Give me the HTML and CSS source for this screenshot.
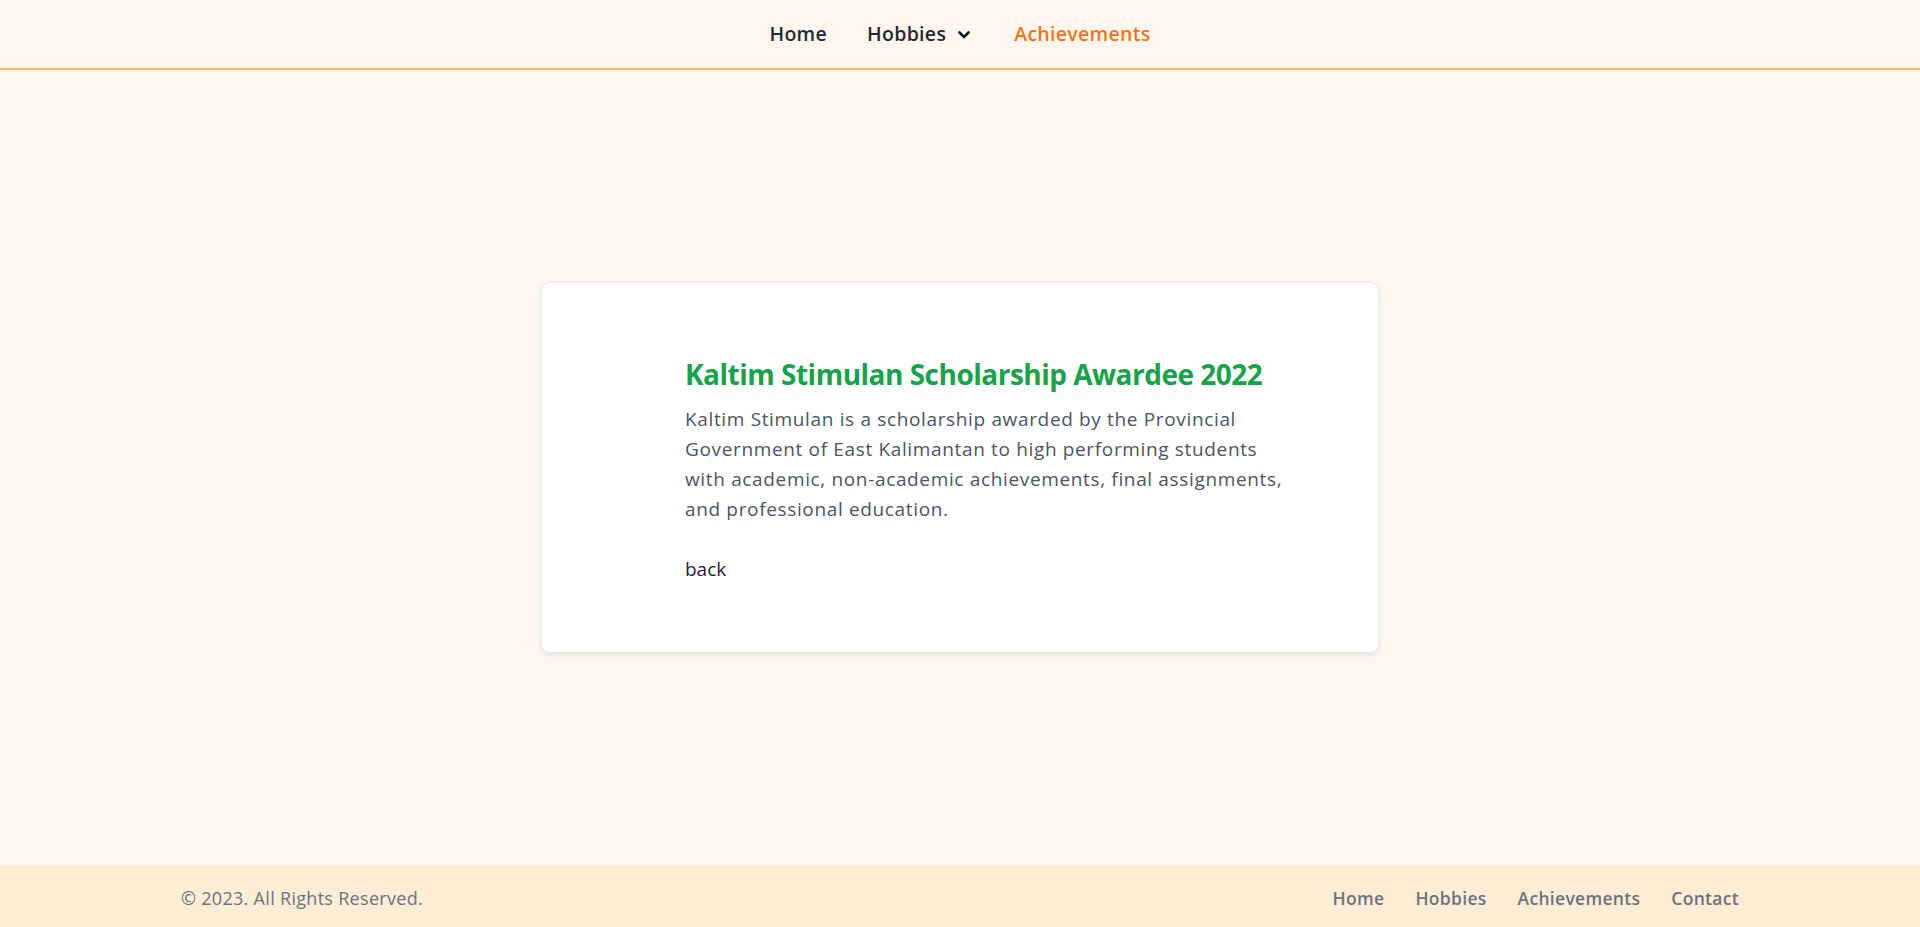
FILE: index.html
```html
<!DOCTYPE html>
<html lang="en">
<head>
<meta charset="utf-8">
<title>Achievements</title>
<link rel="stylesheet" href="styles.css">
</head>
<body>
<div class="page">
  <header class="header">
    <nav class="nav">
      <a class="nav-link" href="#">Home</a>
      <a class="nav-link nav-drop" href="#">Hobbies
        <svg class="chev" width="12" height="8" viewBox="0 0 12 8"><path d="M1.5 1.5 L6 6 L10.5 1.5" fill="none" stroke="#111827" stroke-width="2.6" stroke-linecap="round" stroke-linejoin="round"/></svg>
      </a>
      <a class="nav-link active" href="#">Achievements</a>
    </nav>
  </header>
  <main class="main">
    <section class="card">
      <div class="card-body">
        <h1 class="title">Kaltim Stimulan Scholarship Awardee 2022</h1>
        <p class="desc">Kaltim Stimulan is a scholarship awarded by the Provincial Government of East Kalimantan to high performing students with academic, non-academic achievements, final assignments, and professional education.</p>
        <a class="back" href="#">back</a>
      </div>
    </section>
  </main>
  <footer class="footer">
    <span class="copy">© 2023. All Rights Reserved.</span>
    <nav class="foot-nav">
      <a href="#">Home</a>
      <a href="#">Hobbies</a>
      <a href="#">Achievements</a>
      <a href="#">Contact</a>
    </nav>
  </footer>
</div>
</body>
</html>
```

FILE: styles.css
```css
* { box-sizing: border-box; }
html, body { margin: 0; padding: 0; }
body {
  font-family: "Open Sans", "Noto Sans", sans-serif;
  background: #fff7ed;
  color: #1f2937;
}
a { text-decoration: none; color: inherit; }
.page {
  min-height: 927px;
  display: flex;
  flex-direction: column;
}
.header {
  height: 70px;
  border-bottom: 2px solid #fdba74;
  display: flex;
  justify-content: center;
  align-items: center;
}
.nav {
  display: flex;
  align-items: center;
  gap: 40px;
  padding-bottom: 1px;
}
.nav-link {
  font-size: 19.5px;
  font-weight: 600;
  letter-spacing: 0.3px;
  color: #1f2937;
  display: flex;
  align-items: center;
}
.nav-drop { gap: 12px; }
.chev { margin-right: 4px; margin-top: 2px; }
.nav-link.active { color: #f97316; }
.main {
  flex: 1;
  display: flex;
  justify-content: center;
  align-items: center;
}
.card {
  width: 838px;
  height: 371px;
  background: #fff;
  border-radius: 8px;
  border: 1px solid #ece7e2;
  box-shadow: 0 2px 4px rgba(0,0,0,0.08);
  padding: 73px 80px 0 143px;
}
.title {
  margin: 0 0 12px;
  font-size: 28px;
  font-weight: 700;
  color: #16a34a;
  line-height: 36px;
  letter-spacing: -0.5px;
}
.desc {
  margin: 0;
  font-size: 19px;
  line-height: 30px;
  color: #4b5563;
  letter-spacing: 0.65px;
  max-width: 622px;
}
.back {
  display: inline-block;
  margin-top: 30px;
  font-size: 19px;
  line-height: 30px;
  color: #1e1b4b;
}
.footer {
  height: 62px;
  background: #ffedd5;
  display: flex;
  align-items: center;
  justify-content: space-between;
  padding: 0 181px 0 181px;
}
.copy {
  font-size: 18px;
  color: #6b7280;
  letter-spacing: 0.3px;
  padding-top: 3px;
}
.foot-nav {
  display: flex;
  gap: 31px;
  padding-top: 3px;
}
.foot-nav a {
  font-size: 17.5px;
  font-weight: 600;
  color: #6b7280;
  letter-spacing: 0.3px;
}
```
